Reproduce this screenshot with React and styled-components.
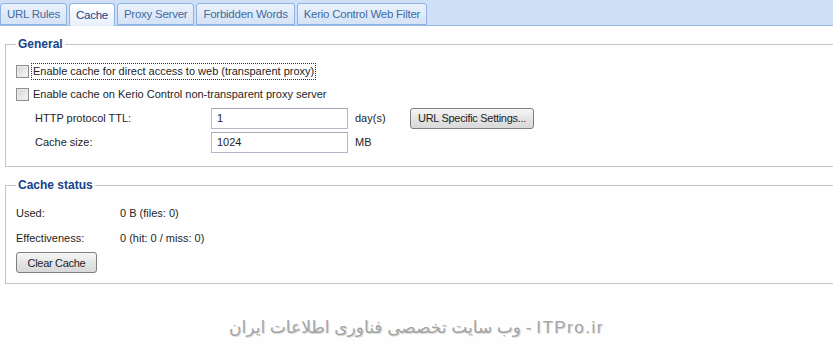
import React from 'react';
import styled, { createGlobalStyle } from 'styled-components';

const Global = createGlobalStyle`
  html, body { margin: 0; padding: 0; background: #ffffff; }
  body {
    font-family: "Liberation Sans", Arial, sans-serif;
    font-size: 11px;
    color: #1e1e1e;
  }
`;

const Page = styled.div`
  width: 833px;
  height: 353px;
  overflow: hidden;
  background: #fefefe;
`;

const TabStrip = styled.div`
  display: flex;
  align-items: flex-end;
  height: 25px;
  background: #cfdff6;
  border-bottom: 1px solid #99bbe8;
`;

const Tab = styled.div`
  box-sizing: border-box;
  height: ${p => (p.$active ? 23 : 22)}px;
  margin-bottom: ${p => (p.$active ? -1 : 0)}px;
  margin-right: 2px;
  padding: 0 6px 1px;
  display: flex;
  align-items: center;
  border: 1px solid #8db2e3;
  border-bottom: ${p => (p.$active ? 'none' : '1px solid #8db2e3')};
  border-radius: 3px 3px 0 0;
  background: ${p =>
    p.$active
      ? 'linear-gradient(#ffffff, #e6effb)'
      : 'linear-gradient(#eaf1fb, #d5e3f6)'};
  color: ${p => (p.$active ? '#15428b' : '#416aa3')};
  font-size: 11.5px;
  letter-spacing: -0.25px;
  white-space: nowrap;
`;

const Content = styled.div`
  padding-left: 5px;
`;

const Group = styled.fieldset`
  margin: 11px -10px 0 0;
  padding: ${p => p.$pad};
  border: 1px solid #c4c4c4;
  min-width: 0;
`;

const Legend = styled.legend`
  padding: 0 2px;
  font-weight: bold;
  font-size: 12px;
  line-height: 14px;
  color: #15428b;
`;

const CheckRow = styled.div`
  display: flex;
  align-items: center;
  height: 23px;
  gap: 3px;
`;

const Check = styled.span`
  box-sizing: border-box;
  width: 13px;
  height: 13px;
  border: 1px solid #8f8f8f;
  background: linear-gradient(135deg, #d6d6d6, #f7f7f7);
  box-shadow: inset 0 0 0 1px #ececec;
`;

const CheckLabel = styled.span`
  padding: 1px 1px 2px;
  outline: ${p => (p.$focus ? '1px dotted #333' : 'none')};
`;

const FieldRow = styled.div`
  display: grid;
  grid-template-columns: 176px 137px 62px auto;
  align-items: center;
  height: 24px;
  padding-left: 19px;
`;

const Input = styled.input`
  box-sizing: border-box;
  width: 137px;
  height: 21px;
  margin: 0;
  padding: 0 5px;
  border: 1px solid #b5b8c8;
  border-top-color: #a3a6b4;
  background: #fff;
  font: inherit;
  color: #1e1e1e;
`;

const Unit = styled.span`
  padding-left: 7px;
`;

const Button = styled.button`
  box-sizing: border-box;
  height: 21px;
  min-width: 81px;
  margin: 0;
  padding: 0 7px;
  justify-self: start;
  border: 1px solid #7f7f7f;
  border-radius: 3px;
  background: linear-gradient(#f7f7f7, #e4e4e4 50%, #d9d9d9);
  font: inherit;
  letter-spacing: -0.3px;
  color: #1e1e1e;
`;

const StatusRow = styled.div`
  display: grid;
  grid-template-columns: 104px auto;
  align-items: center;
  height: 25px;
`;

const ButtonRow = styled.div`
  padding-top: 2px;
`;

const Watermark = styled.div`
  margin-top: 34px;
  line-height: 20px;
  text-align: center;
  direction: rtl;
  font-family: "Liberation Sans", "DejaVu Sans", sans-serif;
  font-size: 17px;
  color: #a4a4a4;
  text-shadow: 1px 1px 0 #dcdcdc;
`;

const Site = styled.span`
  letter-spacing: 1.5px;
`;

const tabs = ['URL Rules', 'Cache', 'Proxy Server', 'Forbidden Words', 'Kerio Control Web Filter'];

export default function App() {
  return (
    <Page>
      <Global />
      <TabStrip>
        {tabs.map(t => (
          <Tab key={t} $active={t === 'Cache'}>{t}</Tab>
        ))}
      </TabStrip>
      <Content>
        <Group $pad="9px 10px 12px">
          <Legend>General</Legend>
          <CheckRow>
            <Check />
            <CheckLabel $focus>Enable cache for direct access to web (transparent proxy)</CheckLabel>
          </CheckRow>
          <CheckRow>
            <Check />
            <CheckLabel>Enable cache on Kerio Control non-transparent proxy server</CheckLabel>
          </CheckRow>
          <FieldRow>
            <span>HTTP protocol TTL:</span>
            <Input defaultValue="1" />
            <Unit>day(s)</Unit>
            <Button>URL Specific Settings...</Button>
          </FieldRow>
          <FieldRow>
            <span>Cache size:</span>
            <Input defaultValue="1024" />
            <Unit>MB</Unit>
          </FieldRow>
        </Group>
        <Group $pad="8px 10px 10px">
          <Legend>Cache status</Legend>
          <StatusRow>
            <span>Used:</span>
            <span>0 B (files: 0)</span>
          </StatusRow>
          <StatusRow>
            <span>Effectiveness:</span>
            <span>0 (hit: 0 / miss: 0)</span>
          </StatusRow>
          <ButtonRow>
            <Button>Clear Cache</Button>
          </ButtonRow>
        </Group>
      </Content>
      <Watermark>
        <Site>ITPro.ir</Site> - وب سایت تخصصی فناوری اطلاعات ایران
      </Watermark>
    </Page>
  );
}
